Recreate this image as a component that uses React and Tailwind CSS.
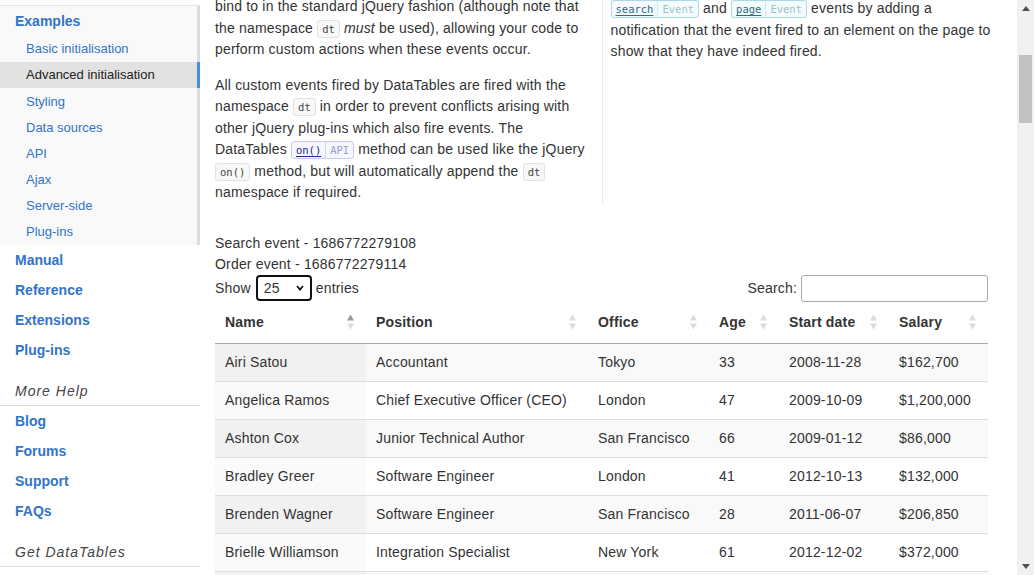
import React from 'react';

const examples = [
  'Basic initialisation',
  'Advanced initialisation',
  'Styling',
  'Data sources',
  'API',
  'Ajax',
  'Server-side',
  'Plug-ins',
];

const rows = [
  ['Airi Satou', 'Accountant', 'Tokyo', '33', '2008-11-28', '$162,700'],
  ['Angelica Ramos', 'Chief Executive Officer (CEO)', 'London', '47', '2009-10-09', '$1,200,000'],
  ['Ashton Cox', 'Junior Technical Author', 'San Francisco', '66', '2009-01-12', '$86,000'],
  ['Bradley Greer', 'Software Engineer', 'London', '41', '2012-10-13', '$132,000'],
  ['Brenden Wagner', 'Software Engineer', 'San Francisco', '28', '2011-06-07', '$206,850'],
  ['Brielle Williamson', 'Integration Specialist', 'New York', '61', '2012-12-02', '$372,000'],
  ['Bruno Nash', 'Software Engineer', 'London', '38', '2011-05-03', '$163,500'],
  ['Caesar Vance', 'Pre-Sales Support', 'New York', '21', '2011-12-12', '$106,450'],
];

const columns = [
  { label: 'Name', width: 'w-[151px]', sorted: true },
  { label: 'Position', width: 'w-[222px]' },
  { label: 'Office', width: 'w-[121px]' },
  { label: 'Age', width: 'w-[70px]' },
  { label: 'Start date', width: 'w-[110px]' },
  { label: 'Salary', width: 'w-[99px]' },
];

// inline code chip; small line-height so it never grows the line box
function Code({ children }) {
  return (
    <code className="rounded-[3px] border border-[#e2e2e2] bg-[#f8f8f8] px-[4px] py-[2px] font-['DejaVu_Sans_Mono',monospace] text-[10.5px] leading-[10px] tracking-normal text-[#444]">
      {children}
    </code>
  );
}

function Tag({ name, type, variant }) {
  const styles =
    variant === 'event'
      ? {
          box: 'border-[#a9d8e6] bg-[#f5fbfd]',
          name: 'text-[#2b6f88] decoration-[#2b6f88]',
          sep: 'border-[#cfe8ef]',
          type: 'text-[#9cc4cf]',
        }
      : {
          box: 'border-[#c8ccf0] bg-[#f6f7fd]',
          name: 'text-[#232399] decoration-[#232399]',
          sep: 'border-[#d6d9f3]',
          type: 'text-[#9a9cd4]',
        };
  return (
    <span
      className={`rounded-[3px] border py-[2px] font-['DejaVu_Sans_Mono',monospace] text-[10.5px] leading-[10px] tracking-normal ${styles.box}`}
    >
      <span className={`px-[4px] underline underline-offset-2 ${styles.name}`}>{name}</span>
      <span className={`border-l py-[2px] px-[4px] ${styles.sep} ${styles.type}`}>{type}</span>
    </span>
  );
}

function SortIcon({ active }) {
  return (
    <svg width="7" height="15" viewBox="0 0 7 15" className="absolute right-[12px] top-1/2 -translate-y-1/2">
      <polygon points="3.5,0 7,6 0,6" fill={active ? '#9a9a9a' : '#dcdcdc'} />
      <polygon points="0,9 7,9 3.5,15" fill="#dcdcdc" />
    </svg>
  );
}

function Sidebar() {
  const link = 'flex h-[30px] items-center pl-[15px] font-bold text-[#3174c7]';
  const heading =
    'mt-[15.5px] border-b border-[#dddddd] pb-[3.5px] pl-[15px] leading-[21px] italic tracking-[1px] text-[#444]';
  return (
    <aside className="w-[200px] shrink-0 pt-[5px]">
      <div className="border-t border-[#e6e6e6] bg-[#f9f9f9]">
        <div className="flex h-[30px] items-center border-r-[3px] border-[#dddddd] pl-[15px] font-bold text-[#3174c7]">
          Examples
        </div>
        {examples.map((item) => {
          const active = item === 'Advanced initialisation';
          return (
            <div
              key={item}
              className={`flex h-[26.15px] items-center border-r-[3px] pl-[26px] text-[13px] ${
                active ? 'border-[#4a8fe0] bg-[#e2e2e2] text-[#222]' : 'border-[#dddddd] text-[#3174c7]'
              }`}
            >
              {item}
            </div>
          );
        })}
      </div>
      <div className={link}>Manual</div>
      <div className={link}>Reference</div>
      <div className={link}>Extensions</div>
      <div className={link}>Plug-ins</div>
      <div className={heading}>More Help</div>
      <div className={link}>Blog</div>
      <div className={link}>Forums</div>
      <div className={link}>Support</div>
      <div className={link}>FAQs</div>
      <div className={heading}>Get DataTables</div>
    </aside>
  );
}

function Scrollbar() {
  return (
    <div className="flex w-[17px] shrink-0 flex-col bg-[#f1f1f1]">
      <div className="flex h-[17px] items-center justify-center">
        <svg width="8" height="5" viewBox="0 0 8 5">
          <polygon points="4,0 8,5 0,5" fill="#505050" />
        </svg>
      </div>
      <div className="mx-[2px] mt-[38px] h-[68px] bg-[#c1c1c1]" />
      <div className="flex-1" />
      <div className="flex h-[17px] items-center justify-center">
        <svg width="8" height="5" viewBox="0 0 8 5">
          <polygon points="0,0 8,0 4,5" fill="#505050" />
        </svg>
      </div>
    </div>
  );
}

export default function App() {
  return (
    <div className="flex h-[575px] w-[1034px] overflow-hidden bg-white font-['Liberation_Sans',Arial,sans-serif] text-[14px] text-[#333]">
      <Sidebar />

      <main className="min-w-0 flex-1 pl-[15px] pr-[29px] tracking-[0.18px]">
        <div className="-mt-[4px] grid grid-cols-2 leading-[21.5px]">
          <div className="pr-[10px] whitespace-nowrap">
            <p>
              bind to in the standard jQuery fashion (although note that
              <br />
              the namespace <Code>dt</Code> <em>must</em> be used), allowing your code to
              <br />
              perform custom actions when these events occur.
            </p>
            <p className="mt-[14px]">
              All custom events fired by DataTables are fired with the
              <br />
              namespace <Code>dt</Code> in order to prevent conflicts arising with
              <br />
              other jQuery plug-ins which also fire events. The
              <br />
              DataTables <Tag name="on()" type="API" /> method can be used like the jQuery
              <br />
              <Code>on()</Code> method, but will automatically append the <Code>dt</Code>
              <br />
              namespace if required.
            </p>
          </div>
          <div className="border-l border-[#ececec] pl-[8px] pt-[2px]">
            <p className="whitespace-nowrap">
              <Tag name="search" type="Event" variant="event" /> and <Tag name="page" type="Event" variant="event" />{' '}
              events by adding a
              <br />
              notification that the event fired to an element on the page to
              <br />
              show that they have indeed fired.
            </p>
          </div>
        </div>

        <div className="mt-[29px] leading-[21px]">
          <div>Search event - 1686772279108</div>
          <div>Order event - 1686772279114</div>
        </div>

        <div className="flex h-[27px] items-center justify-between">
          <div className="flex items-center">
            <span>Show</span>
            <div className="relative ml-[5px] mr-[4px] flex h-[26px] w-[56px] items-center rounded-[4px] border-2 border-[#111] pl-[6px]">
              <span>25</span>
              <svg width="8" height="6" viewBox="0 0 8 6" className="absolute right-[6px] top-[8px]">
                <polyline points="1,1 4,4.5 7,1" fill="none" stroke="#111" strokeWidth="1.8" />
              </svg>
            </div>
            <span>entries</span>
          </div>
          <div className="flex items-center gap-[4px]">
            <span>Search:</span>
            <input className="h-[27px] w-[187px] rounded-[3px] border border-[#aaaaaa] bg-white outline-none" />
          </div>
        </div>

        <table className="w-full table-fixed border-collapse">
          <colgroup>
            {columns.map((c) => (
              <col key={c.label} className={c.width} />
            ))}
          </colgroup>
          <thead>
            <tr>
              {columns.map((c) => (
                <th
                  key={c.label}
                  className="relative border-b border-[#aaaaaa] py-[10px] pl-[10px] pr-[18px] text-left font-bold leading-[21px] text-[#333]"
                >
                  {c.label}
                  <SortIcon active={c.sorted} />
                </th>
              ))}
            </tr>
          </thead>
          <tbody>
            {rows.map((r, i) => {
              const odd = i % 2 === 0;
              return (
                <tr key={r[0]} className={odd ? 'bg-[#f9f9f9]' : 'bg-white'}>
                  {r.map((cell, j) => (
                    <td
                      key={j}
                      className={`border-b border-[#dddddd] px-[10px] py-[8px] leading-[21px] whitespace-nowrap ${
                        j === 0 ? (odd ? 'bg-[#f1f1f1]' : 'bg-[#fafafa]') : ''
                      }`}
                    >
                      {cell}
                    </td>
                  ))}
                </tr>
              );
            })}
          </tbody>
        </table>
      </main>

      <Scrollbar />
    </div>
  );
}
